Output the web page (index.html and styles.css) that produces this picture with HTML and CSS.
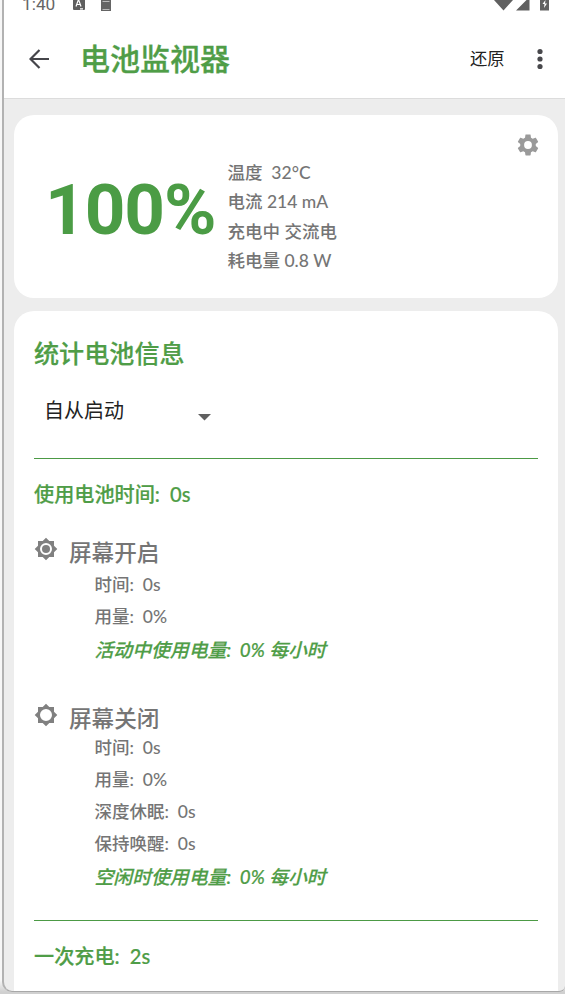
FILE: index.html
```
<!DOCTYPE html>
<html lang="zh-CN">
<head>
<meta charset="utf-8">
<title>电池监视器</title>
<link rel="stylesheet" href="styles.css">
</head>
<body>
<div class="device">
  <div class="status">
    <span class="clock">1:40</span>
    <svg class="keyboard" width="12" height="10" viewBox="0 0 12 10"><path d="M0 0h12v9a1 1 0 0 1-1 1H1a1 1 0 0 1-1-1z" fill="#5f5f5f"/><path d="M3 6.500 5.500-.5 8 6.500M3.800 4.500h3.500M7 8.800h3" fill="none" stroke="#fff" stroke-width="1.200"/></svg>
    <svg class="sim" width="10" height="11" viewBox="0 0 10 11"><path d="M0 0h10v11H0z" fill="#656565"/><path d="M1.500 1.500h7M1.500 9.500h7" stroke="#bbb"/></svg>
    <svg class="signals" width="56" height="11" viewBox="0 0 56 11"><path d="M0 0h19L9.500 10.500zM22 10.500 32.500 0h3v10.500zM46 0h9v10.500h-9z" fill="#606060"/><path d="m51.500 0-3 4h2l-.5 4 3-4.500h-2z" fill="#fff"/></svg>
  </div>
  <header class="bar">
    <svg class="back" width="20" height="20" viewBox="0 0 20 20" fill="none" stroke="#45454a" stroke-width="2.200"><path d="M20 10H1.500M10.500 1 1.500 10l9 9"/></svg>
    <h1>电池监视器</h1>
    <span class="restore">还原</span>
    <svg class="more" width="6" height="22" viewBox="0 0 6 22" fill="#48484c"><circle cx="3" cy="3.500" r="2.600"/><circle cx="3" cy="11" r="2.600"/><circle cx="3" cy="18.500" r="2.600"/></svg>
  </header>
  <main>
    <section class="card summary">
      <div class="percent">100%</div>
      <div class="readings">
        <div>温度&nbsp; 32°C</div>
        <div>电流 214 mA</div>
        <div>充电中 交流电</div>
        <div>耗电量 0.8 W</div>
      </div>
      <svg class="gear" width="26" height="26" viewBox="0 0 24 24" fill="#9a9a9a"><path d="M19.140 12.940c.04-.3.06-.61.06-.94 0-.32-.02-.64-.07-.94l2.030-1.580c.18-.14.23-.41.12-.61l-1.920-3.320c-.12-.22-.37-.29-.59-.22l-2.390.96c-.5-.38-1.030-.7-1.620-.94l-.36-2.540c-.04-.24-.24-.41-.48-.41h-3.840c-.24 0-.43.17-.47.41l-.36 2.540c-.59.24-1.130.57-1.620.94l-2.390-.96c-.22-.08-.47 0-.59.22L2.740 8.870c-.12.21-.08.47.12.61l2.030 1.580c-.05.3-.09.63-.09.94s.02.64.07.94l-2.030 1.580c-.18.14-.23.41-.12.61l1.920 3.320c.12.22.37.29.59.22l2.390-.96c.5.38 1.030.7 1.620.94l.36 2.540c.05.24.24.41.48.41h3.840c.24 0 .44-.17.47-.41l.36-2.540c.59-.24 1.130-.56 1.620-.94l2.390.96c.22.08.47 0 .59-.22l1.920-3.320c.12-.22.07-.47-.12-.61zM12 15.600A3.600 3.600 0 1 1 12 8.400a3.600 3.600 0 0 1 0 7.200z"/></svg>
    </section>
    <section class="card stats">
      <h2>统计电池信息</h2>
      <div class="select"><span>自从启动</span><svg width="13" height="7" viewBox="0 0 13 7"><path d="M0 0h13L6.500 6.500z" fill="#606060"/></svg></div>
      <hr>
      <h3>使用电池时间:&nbsp; 0s</h3>
      <div class="group on">
        <svg class="sun" width="24" height="24" viewBox="0 0 24 24" fill="#808080"><path fill-rule="evenodd" d="M20 8.690V4h-4.690L12 .69 8.690 4H4v4.690L.69 12 4 15.310V20h4.690L12 23.310 15.310 20H20v-4.690L23.310 12zM12 18a6 6 0 1 1 0-12 6 6 0 0 1 0 12z"/><circle cx="12" cy="12" r="4"/></svg>
        <div class="details">
          <h4>屏幕开启</h4>
          <p>时间:&nbsp; 0s</p>
          <p>用量:&nbsp; 0%</p>
          <p class="rate">活动中使用电量:&nbsp; 0% 每小时</p>
        </div>
      </div>
      <div class="group off">
        <svg class="sun" width="24" height="24" viewBox="0 0 24 24" fill="#808080"><path fill-rule="evenodd" d="M20 8.690V4h-4.690L12 .69 8.690 4H4v4.690L.69 12 4 15.310V20h4.690L12 23.310 15.310 20H20v-4.690L23.310 12zM12 18a6 6 0 1 1 0-12 6 6 0 0 1 0 12z"/></svg>
        <div class="details">
          <h4>屏幕关闭</h4>
          <p>时间:&nbsp; 0s</p>
          <p>用量:&nbsp; 0%</p>
          <p>深度休眠:&nbsp; 0s</p>
          <p>保持唤醒:&nbsp; 0s</p>
          <p class="rate">空闲时使用电量:&nbsp; 0% 每小时</p>
        </div>
      </div>
      <hr>
      <h3>一次充电:&nbsp; 2s</h3>
    </section>
  </main>
</div>
</body>
</html>
```
FILE: styles.css
```
* { box-sizing: border-box; margin: 0; padding: 0; }
body {
  height: 994px;
  overflow: hidden;
  padding-left: 2px;
  background: linear-gradient(#f7f7f7 980px, #d0d0d0 992px);
  font-family: Lato, "Noto Sans CJK SC", sans-serif;
  color: #757575;
  white-space: nowrap;
}
svg { display: block; flex: none; }
.device {
  height: 992px;
  overflow: hidden;
  border-left: 2px solid #b2b2b2;
  border-bottom: 1px solid #a8a8a8;
  border-radius: 0 0 6px 10px;
  background: #ededed;
}
.status { height: 20px; display: flex; align-items: flex-start; background: #fff; padding-left: 18px; }
.clock { width: 51px; margin-top: -6px; font: 17.300px/20px Roboto, sans-serif; color: #666; }
.sim { margin-left: 16px; }
.signals { margin-left: auto; margin-right: 15px; }
.bar {
  height: 79px;
  display: flex;
  align-items: center;
  padding: 0 22px 1px 25px;
  background: #fff;
  border-bottom: 1px solid #dcdcdc;
}
h1 { margin: -2px 0 0 31px; font-size: 30px; line-height: 40px; font-weight: 500; color: #4f9d47; -webkit-text-stroke: .3px; }
.restore { margin: -2px 0 0 auto; font-size: 17.300px; color: #222; }
.more { margin-left: 32.500px; }
main { padding: 16px 7px 0 10px; }
.card { background: #fff; border-radius: 20px; }
.summary { height: 183px; display: flex; padding: 0 17px 0 31px; }
.percent { width: 182.500px; padding-top: 57px; font: 700 71px/76px Roboto, sans-serif; letter-spacing: -1.100px; color: #4b9c45; }
.readings { padding-top: 43px; font-size: 17.500px; line-height: 29.400px; font-weight: 500; }
.gear { margin: 17px 0 0 auto; }
.stats { margin-top: 12.500px; height: 720px; padding: 25px 20px 0; }
h2 { font-size: 25.100px; line-height: 34px; font-weight: 500; color: #4f9d47; -webkit-text-stroke: .2px; }
.select { display: flex; align-items: center; height: 40px; margin-top: 20px; padding-left: 10px; font-size: 20px; color: #222; }
.select span { width: 154px; }
.select svg { margin-top: 15px; }
hr { border: 0; height: 1px; background: #4c9a45; }
.select + hr { margin-top: 28.500px; }
h3 { margin-top: 19.500px; font-size: 20.150px; line-height: 30px; font-weight: 500; color: #4f9d47; -webkit-text-stroke: .2px; }
.group { display: flex; gap: 11px; }
.on { margin-top: 28.500px; height: 166px; }
.off { height: 217px; }
h4 { font-size: 22.600px; line-height: 32px; font-weight: 500; }
.details p { padding-left: 25.500px; font-size: 17.500px; line-height: 32px; font-weight: 500; }
.off h4 { height: 29px; }
.details .rate { font-size: 18.850px; line-height: 34px; font-style: italic; color: #4f9d47; -webkit-text-stroke: .2px; }
```
